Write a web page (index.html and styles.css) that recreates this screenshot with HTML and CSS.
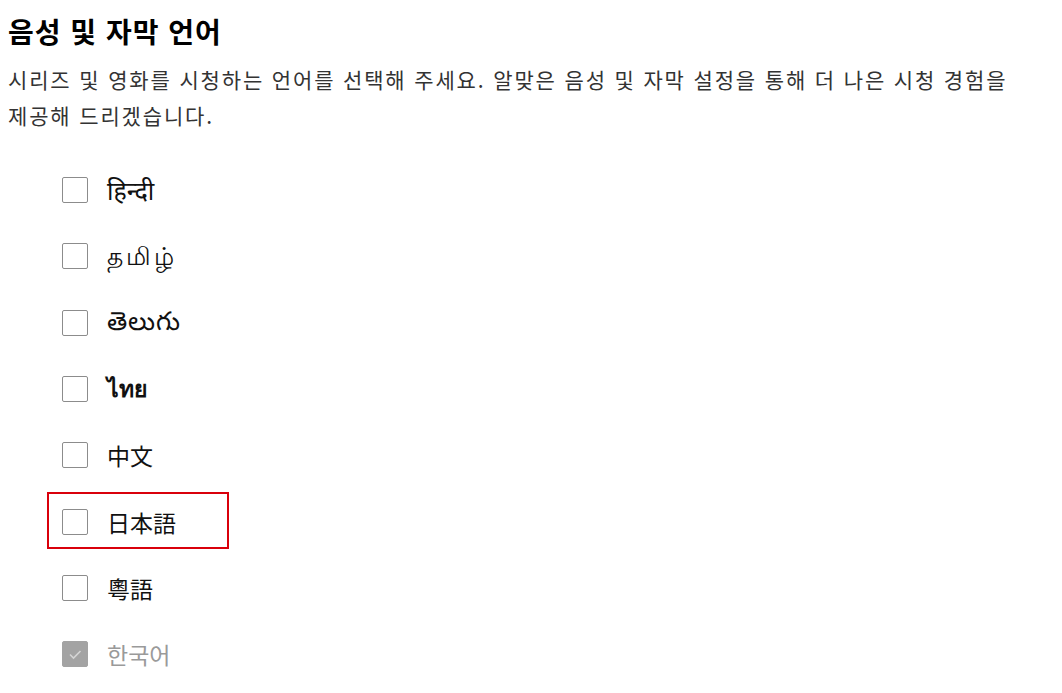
FILE: index.html
```html
<!DOCTYPE html>
<html lang="ko">
<head>
<meta charset="utf-8">
<link rel="stylesheet" href="styles.css">
</head>
<body>
<main class="page">
  <h1 class="title">음성 및 자막 언어</h1>
  <p class="desc">시리즈 및 영화를 시청하는 언어를 선택해 주세요. 알맞은 음성 및 자막 설정을 통해 더 나은 시청 경험을 제공해 드리겠습니다.</p>
  <ul class="lang-list">
    <li class="lang"><span class="box"></span><span class="label label-hi">हिन्दी</span></li>
    <li class="lang"><span class="box"></span><span class="label label-ta">தமிழ்</span></li>
    <li class="lang"><span class="box"></span><span class="label label-te">తెలుగు</span></li>
    <li class="lang"><span class="box"></span><span class="label label-thai">ไทย</span></li>
    <li class="lang"><span class="box"></span><span class="label label-cjk">中文</span></li>
    <li class="lang lang-marked"><span class="box"></span><span class="label label-cjk">日本語</span></li>
    <li class="lang"><span class="box"></span><span class="label label-cjk">粵語</span></li>
    <li class="lang lang-disabled"><span class="box box-checked"><svg viewBox="0 0 26 26" width="26" height="26"><path d="M8 13.5 L11.5 17 L18.5 10" fill="none" stroke="#d4d4d4" stroke-width="1.6"/></svg></span><span class="label">한국어</span></li>
  </ul>
</main>
</body>
</html>
```
FILE: styles.css
```css
html, body {
  margin: 0;
  padding: 0;
  background: #fff;
}
body {
  font-family: "Noto Sans CJK KR", "Noto Sans", sans-serif;
  color: #000;
}
.page {
  padding: 10px 8px 0 8px;
}
.title {
  margin: 0;
  font-size: 28px;
  line-height: 42px;
  font-weight: 700;
  color: #000;
  letter-spacing: 1px;
}
.desc {
  margin: 9px 0 0 0;
  font-size: 21px;
  line-height: 36px;
  color: #333;
  max-width: 1015px;
  letter-spacing: 1.85px;
}
.lang-list {
  list-style: none;
  margin: 24px 0 0 0;
  padding: 0 0 0 54px;
}
.lang {
  display: flex;
  align-items: center;
  gap: 19px;
  height: 66.3px;
  position: relative;
}
.box {
  width: 24px;
  height: 24px;
  border: 1px solid #8c8c8c;
  border-radius: 2px;
  box-sizing: content-box;
  background: #fff;
  flex: none;
  display: flex;
}
.box-checked {
  background: #a3a3a3;
  border-color: #a3a3a3;
}
.box-checked svg {
  margin: -1px;
}
.label {
  font-family: "Noto Sans", "Noto Sans CJK JP", sans-serif;
  font-size: 23px;
  color: #111;
}
.label-hi {
  font-size: 25px;
}
.label-ta {
  font-size: 25px;
  letter-spacing: 3px;
}
.label-te {
  font-size: 26px;
  letter-spacing: 1px;
}
.label-thai {
  font-weight: 600;
}
.label-cjk {
  font-family: "Noto Sans CJK TC", sans-serif;
}
.lang-disabled .label {
  font-family: "Noto Sans CJK KR", sans-serif;
  color: #9a9a9a;
}
.lang-marked::after {
  content: "";
  position: absolute;
  left: -15px;
  top: 4px;
  width: 178px;
  height: 53px;
  border: 2px solid #d9000b;
}
```
